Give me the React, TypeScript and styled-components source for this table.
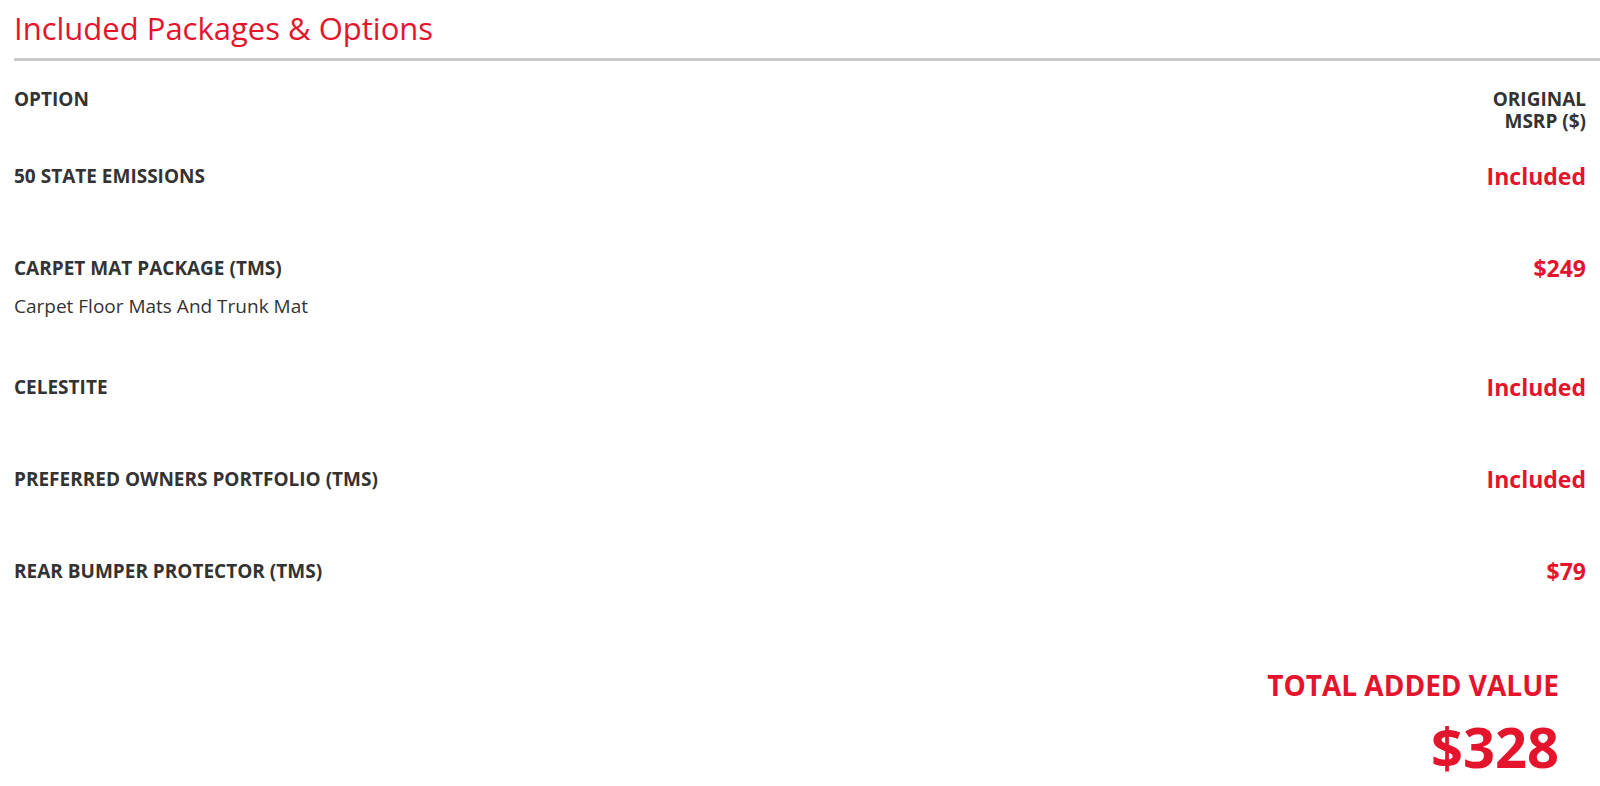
import React from 'react'
import styled, { createGlobalStyle } from 'styled-components'

const GlobalStyle = createGlobalStyle`
  html, body {
    margin: 0;
    padding: 0;
    background: #fff;
  }
  body {
    font-family: 'Open Sans', 'Liberation Sans', sans-serif;
    color: #333;
  }
`

const RED = '#e4142c'

const Page = styled.div`
  padding-left: 14px;
`

const Heading = styled.h2`
  margin: 0;
  padding: 8px 0 10px;
  font-size: 31px;
  line-height: 40px;
  font-weight: 400;
  color: ${RED};
  border-bottom: 3px solid #cacaca;
`

const Table = styled.div`
  padding: 27px 14px 0 0;
`

const HeadRow = styled.div`
  display: flex;
  justify-content: space-between;
  align-items: flex-start;
  margin-bottom: 34px;
`

const HeadCell = styled.div<{ $right?: boolean }>`
  font-size: 19px;
  line-height: 22px;
  font-weight: 700;
  text-transform: uppercase;
  text-align: ${(p) => (p.$right ? 'right' : 'left')};
`

const Row = styled.div`
  display: flex;
  justify-content: space-between;
  align-items: flex-start;
  min-height: 35px;
  margin-bottom: 57px;
`

const OptionName = styled.div`
  font-size: 19px;
  line-height: 21px;
  font-weight: 700;
  text-transform: uppercase;
`

const OptionDesc = styled.div`
  margin-top: 14px;
  font-size: 19px;
  line-height: 27px;
  font-weight: 400;
`

const Price = styled.div`
  font-size: 23px;
  line-height: 20px;
  font-weight: 700;
  color: ${RED};
  text-align: right;
`

const Total = styled.div`
  display: flex;
  flex-direction: column;
  align-items: flex-end;
  gap: 12px;
  padding: 15px 27px 0 0;
  color: ${RED};
  font-weight: 700;
`

const TotalLabel = styled.div`
  font-size: 28px;
  line-height: 34px;
  text-transform: uppercase;
`

const TotalValue = styled.div`
  font-size: 56px;
  line-height: 64px;
`

const options = [
  { name: '50 State Emissions', price: 'Included' },
  { name: 'Carpet Mat Package (TMS)', desc: 'Carpet Floor Mats And Trunk Mat', price: '$249' },
  { name: 'Celestite', price: 'Included' },
  { name: 'Preferred Owners Portfolio (TMS)', price: 'Included' },
  { name: 'Rear Bumper Protector (TMS)', price: '$79' },
]

const App = () => {
  return (
    <Page>
      <GlobalStyle />
      <Heading>Included Packages &amp; Options</Heading>
      <Table>
        <HeadRow>
          <HeadCell>Option</HeadCell>
          <HeadCell $right>
            Original
            <br />
            MSRP ($)
          </HeadCell>
        </HeadRow>
        {options.map((o) => (
          <Row key={o.name}>
            <div>
              <OptionName>{o.name}</OptionName>
              {o.desc && <OptionDesc>{o.desc}</OptionDesc>}
            </div>
            <Price>{o.price}</Price>
          </Row>
        ))}
        <Total>
          <TotalLabel>Total Added Value</TotalLabel>
          <TotalValue>$328</TotalValue>
        </Total>
      </Table>
    </Page>
  )
}

export default App
